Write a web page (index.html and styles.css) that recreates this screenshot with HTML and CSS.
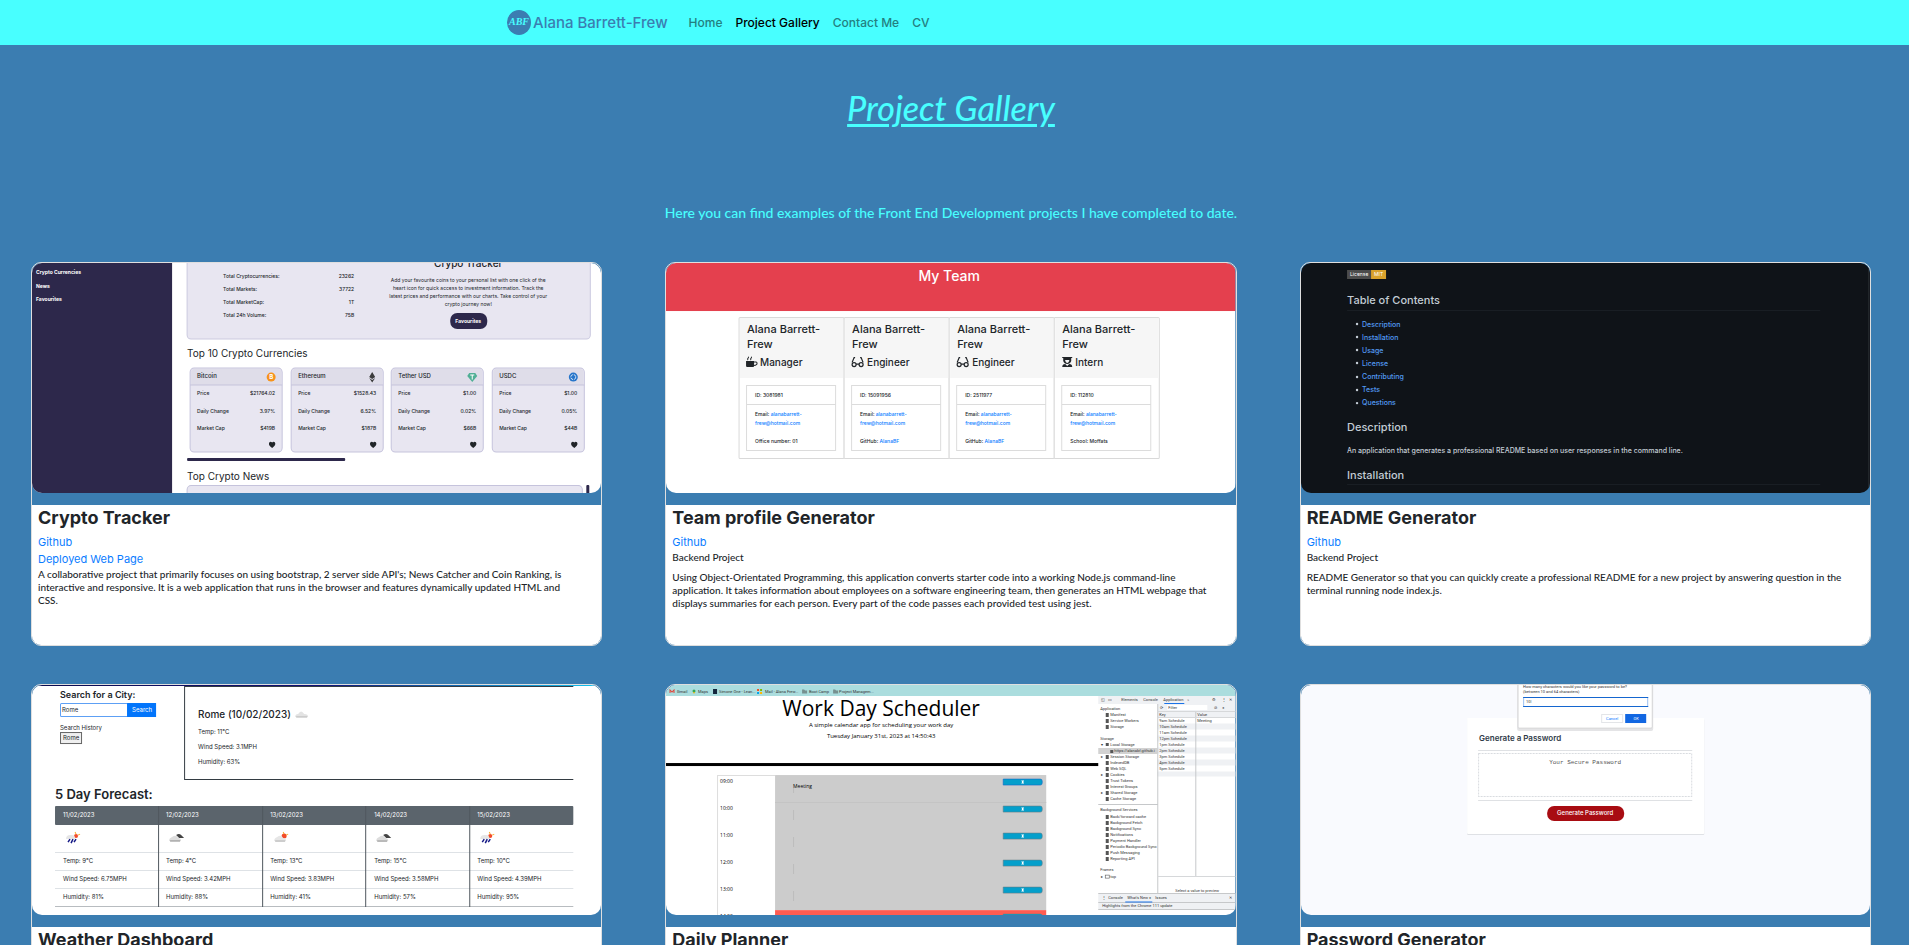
FILE: index.html
```html
<!DOCTYPE html>
<html lang="en">
<head>
<meta charset="utf-8">
<title>Project Gallery</title>
<link rel="stylesheet" href="styles.css">
</head>
<body>
<header class="navbar">
  <a class="brand" href="#">
    <svg class="logo" viewBox="0 0 24 25" aria-hidden="true"><ellipse cx="12" cy="12.5" rx="12" ry="12.5" fill="#3b7db1"/><text x="12" y="15" text-anchor="middle" class="logo-text">ABF</text></svg>
    <span>Alana Barrett-Frew</span>
  </a>
  <nav class="links">
    <a href="#">Home</a>
    <a href="#" class="active" aria-current="page">Project Gallery</a>
    <a href="#">Contact Me</a>
    <a href="#">CV</a>
  </nav>
</header>
<main class="page">
  <h1 class="heading">Project Gallery</h1>
  <p class="intro">Here you can find examples of the Front End Development projects I have completed to date.</p>
  <div class="gallery">

    <article class="card">
      <svg class="shot" viewBox="0 0 569 230" role="img" aria-label="Crypto Tracker">
        <rect width="569" height="230" fill="#fff"/>
        <rect width="140" height="230" fill="#2d284b"/>
        <g class="t5 bold" fill="#fff"><text x="4" y="11">Crypto Currencies</text><text x="4" y="25">News</text><text x="4" y="38">Favourites</text></g>
        <rect x="155" y="-8" width="403" height="84" rx="4" fill="#e8e6f1" stroke="#cbc9df"/>
        <g class="t5 ink medium"><text x="191" y="15">Total Cryptocurrencies:</text><text x="191" y="28">Total Markets:</text><text x="191" y="41">Total MarketCap:</text><text x="191" y="54">Total 24h Volume:</text></g>
        <g class="t5 ink end medium"><text x="322" y="15">23262</text><text x="322" y="28">37722</text><text x="322" y="41">1T</text><text x="322" y="54">75B</text></g>
        <text x="436" y="4" class="t10 ink mid medium">Crypo Tracker</text>
        <g class="t5 ink mid"><text x="436" y="19">Add your favourite coins to your personal list with one click of the</text><text x="436" y="27">heart icon for quick access to investment information. Track the</text><text x="436" y="35">latest prices and performance with our charts. Take control of your</text><text x="436" y="43">crypto journey now!</text></g>
        <rect x="418" y="50" width="37" height="16" rx="7" fill="#2d284b"/>
        <text x="436" y="60" class="t5 mid bold" fill="#fff">Favourites</text>
        <text x="155" y="94" class="t10 ink">Top 10 Crypto Currencies</text>
        <g transform="translate(158 105)"><rect width="92" height="84" rx="4" fill="#e8e6f1" stroke="#c5c3dc"/><path d="M1 17V4a3 3 0 0 1 3-3h84a3 3 0 0 1 3 3v13z" fill="#dfdde9"/><path d="M0 17h92" stroke="#c5c3dc"/><text x="7" y="10" class="t6 ink medium">Bitcoin</text><circle cx="81" cy="9" r="4.5" fill="#f7931a"/><text x="81" y="11" class="t6 mid bold" fill="#fff">B</text><g class="t5 ink medium"><text x="7" y="27">Price</text><text x="7" y="45">Daily Change</text><text x="7" y="62">Market Cap</text></g><g class="t5 ink end medium"><text x="85" y="27">$21764.02</text><text x="85" y="45">3.97%</text><text x="85" y="62">$419B</text></g><path d="M82 80c-6-4-2-8 0-5.500c2-2.500 6 1.500 0 5.500z" fill="#212529"/></g>
        <g transform="translate(259 105)"><rect width="92" height="84" rx="4" fill="#e8e6f1" stroke="#c5c3dc"/><path d="M1 17V4a3 3 0 0 1 3-3h84a3 3 0 0 1 3 3v13z" fill="#dfdde9"/><path d="M0 17h92" stroke="#c5c3dc"/><text x="7" y="10" class="t6 ink medium">Ethereum</text><path d="M81 4l3 5-3 2-3-2zM78 10l3 2 3-2-3 4.500z" fill="#3c3c3d"/><g class="t5 ink medium"><text x="7" y="27">Price</text><text x="7" y="45">Daily Change</text><text x="7" y="62">Market Cap</text></g><g class="t5 ink end medium"><text x="85" y="27">$1528.43</text><text x="85" y="45">6.52%</text><text x="85" y="62">$187B</text></g><path d="M82 80c-6-4-2-8 0-5.500c2-2.500 6 1.500 0 5.500z" fill="#212529"/></g>
        <g transform="translate(359 105)"><rect width="92" height="84" rx="4" fill="#e8e6f1" stroke="#c5c3dc"/><path d="M1 17V4a3 3 0 0 1 3-3h84a3 3 0 0 1 3 3v13z" fill="#dfdde9"/><path d="M0 17h92" stroke="#c5c3dc"/><text x="7" y="10" class="t6 ink medium">Tether USD</text><path d="M78 5h6l2 3-5 6-5-6z" fill="#50af95"/><path d="M79 7h4M81 7v4.500" stroke="#fff"/><g class="t5 ink medium"><text x="7" y="27">Price</text><text x="7" y="45">Daily Change</text><text x="7" y="62">Market Cap</text></g><g class="t5 ink end medium"><text x="85" y="27">$1.00</text><text x="85" y="45">0.02%</text><text x="85" y="62">$66B</text></g><path d="M82 80c-6-4-2-8 0-5.500c2-2.500 6 1.500 0 5.500z" fill="#212529"/></g>
        <g transform="translate(460 105)"><rect width="92" height="84" rx="4" fill="#e8e6f1" stroke="#c5c3dc"/><path d="M1 17V4a3 3 0 0 1 3-3h84a3 3 0 0 1 3 3v13z" fill="#dfdde9"/><path d="M0 17h92" stroke="#c5c3dc"/><text x="7" y="10" class="t6 ink medium">USDC</text><circle cx="81" cy="9" r="4.500" fill="#2775ca"/><circle cx="81" cy="9" r="2.500" fill="none" stroke="#fff" stroke-width=".8" stroke-dasharray="3 1"/><g class="t5 ink medium"><text x="7" y="27">Price</text><text x="7" y="45">Daily Change</text><text x="7" y="62">Market Cap</text></g><g class="t5 ink end medium"><text x="85" y="27">$1.00</text><text x="85" y="45">0.05%</text><text x="85" y="62">$44B</text></g><path d="M82 80c-6-4-2-8 0-5.500c2-2.500 6 1.500 0 5.500z" fill="#212529"/></g>
        <rect x="155" y="195" width="158" height="3" rx="1" fill="#2d284b"/>
        <text x="155" y="217" class="t10 ink">Top Crypto News</text>
        <rect x="155" y="222.500" width="395" height="20" rx="4" fill="#e8e6f1" stroke="#c5c3dc"/>
        <rect x="554" y="222" width="3" height="20" rx="1" fill="#2d284b"/>
      </svg>
      <div class="body">
        <h2>Crypto Tracker</h2>
        <a href="#">Github</a>
        <a href="#">Deployed Web Page</a>
        <p>A collaborative project that primarily focuses on using bootstrap, 2 server side API's; News Catcher and Coin Ranking, is interactive and responsive. It is a web application that runs in the browser and features dynamically updated HTML and CSS.</p>
      </div>
    </article>

    <article class="card">
      <svg class="shot" viewBox="0 0 569 230" role="img" aria-label="Team profile Generator">
        <rect width="569" height="230" fill="#fff"/>
        <rect width="569" height="48" fill="#e4404e"/>
        <text x="283" y="18" class="t14 mid medium" fill="#fff">My Team</text>
        <g fill="#fff" stroke="#d9d9d9"><rect x="73" y="54.500" width="105" height="141" rx="1"/><rect x="178" y="54.500" width="105" height="141" rx="1"/><rect x="283" y="54.500" width="105" height="141" rx="1"/><rect x="388" y="54.500" width="105" height="141" rx="1"/></g>
        <path d="M74 55h103v60H74zM179 55h103v60H179zM284 55h103v60H284zM389 55h103v60H389z" fill="#f6f6f6"/>
        <g fill="none" stroke="#dcdcdc"><path d="M80.500 122.500h89v65h-89zM80.500 141.500h89M185.500 122.500h89v65h-89zM185.500 141.500h89M290.500 122.500h89v65h-89zM290.500 141.500h89M395.500 122.500h89v65h-89zM395.500 141.500h89"/></g>
        <g class="t11 ink medium"><text x="81" y="70">Alana Barrett-</text><text x="81" y="85">Frew</text><text x="186" y="70">Alana Barrett-</text><text x="186" y="85">Frew</text><text x="291" y="70">Alana Barrett-</text><text x="291" y="85">Frew</text><text x="396" y="70">Alana Barrett-</text><text x="396" y="85">Frew</text></g>
        <g class="t10 ink medium"><text x="94" y="103">Manager</text><text x="201" y="103">Engineer</text><text x="306" y="103">Engineer</text><text x="409" y="103">Intern</text></g>
        <path d="M80 98h8v5q0 1-1 1h-6q-1 0-1-1z" fill="#212529"/><path d="M88 99h2q1 0 1 1.500t-3 2M82 97q-1-1 0-2t0-1M85 97q-1-1 0-2t0-1" fill="none" stroke="#212529"/>
        <g fill="none" stroke="#212529" stroke-width="1.200"><path d="M189 94.500h-1l-2 5M194 94.500h1l2 5M190 101h3"/><circle cx="188" cy="101.500" r="2"/><circle cx="195" cy="101.500" r="2"/><path d="M294 94.500h-1l-2 5M299 94.500h1l2 5M295 101h3"/><circle cx="293" cy="101.500" r="2"/><circle cx="300" cy="101.500" r="2"/></g>
        <path d="M396 94h10v1h-1v3q-1 3-4 3t-4-3v-3h-1zM396 104q0-3 3-3l2 2 2-2q3 0 3 3z" fill="#212529"/><path d="M399 97h4v1q-1 2-2 2t-2-2z" fill="#f6f6f6"/>
        <g class="t5 ink medium"><text x="89" y="134">ID: 3081981</text><text x="194" y="134">ID: 15091956</text><text x="299" y="134">ID: 2511977</text><text x="404" y="134">ID: 112810</text>
        <text x="89" y="153">Email: <tspan class="blue">alanabarrett-</tspan></text><text x="194" y="153">Email: <tspan class="blue">alanabarrett-</tspan></text><text x="299" y="153">Email: <tspan class="blue">alanabarrett-</tspan></text><text x="404" y="153">Email: <tspan class="blue">alanabarrett-</tspan></text>
        <text x="89" y="162" class="blue">frew@hotmail.com</text><text x="194" y="162" class="blue">frew@hotmail.com</text><text x="299" y="162" class="blue">frew@hotmail.com</text><text x="404" y="162" class="blue">frew@hotmail.com</text>
        <text x="89" y="180">Office number: 01</text><text x="194" y="180">GitHub: <tspan class="blue">AlanaBF</tspan></text><text x="299" y="180">GitHub: <tspan class="blue">AlanaBF</tspan></text><text x="404" y="180">School: Moffats</text></g>
      </svg>
      <div class="body">
        <h2>Team profile Generator</h2>
        <a href="#">Github</a>
        <p class="kind">Backend Project</p>
        <p>Using Object-Orientated Programming, this application converts starter code into a working Node.js command-line application. It takes information about employees on a software engineering team, then generates an HTML webpage that displays summaries for each person. Every part of the code passes each provided test using jest.</p>
      </div>
    </article>

    <article class="card">
      <svg class="shot" viewBox="0 0 569 230" role="img" aria-label="README Generator">
        <rect width="569" height="230" fill="#0f1318"/>
        <rect x="46" y="7" width="24" height="9" fill="#4c4c4c"/><rect x="70" y="7" width="15" height="9" fill="#d9a22c"/>
        <g class="t5" fill="#fff"><text x="49" y="13">License</text><text x="73" y="13">MIT</text></g>
        <g class="t11 medium" fill="#c3ccd5"><text x="46" y="41">Table of Contents</text><text x="46" y="168">Description</text><text x="46" y="216">Installation</text></g>
        <path d="M46 47.500h473M46 221.500h473" stroke="#191e24"/><path d="M567.500 0v230" stroke="#2a2e33"/>
        <g fill="#c3ccd5"><circle cx="56" cy="61" r="1.200"/><circle cx="56" cy="74" r="1.200"/><circle cx="56" cy="87" r="1.200"/><circle cx="56" cy="100" r="1.200"/><circle cx="56" cy="114" r="1.200"/><circle cx="56" cy="127" r="1.200"/><circle cx="56" cy="140" r="1.200"/></g>
        <g class="t7 medium" fill="#539bf5"><text x="61" y="64">Description</text><text x="61" y="77">Installation</text><text x="61" y="90">Usage</text><text x="61" y="103">License</text><text x="61" y="116">Contributing</text><text x="61" y="129">Tests</text><text x="61" y="142">Questions</text></g>
        <text x="46" y="190" class="t7 medium" fill="#c3ccd5">An application that generates a professional README based on user responses in the command line.</text>
      </svg>
      <div class="body">
        <h2>README Generator</h2>
        <a href="#">Github</a>
        <p class="kind">Backend Project</p>
        <p>README Generator so that you can quickly create a professional README for a new project by answering question in the terminal running node index.js.</p>
      </div>
    </article>

    <article class="card">
      <svg class="shot" viewBox="0 0 569 230" role="img" aria-label="Weather Dashboard">
        <defs><linearGradient id="sky"><stop offset="0" stop-color="#0b0b4d"/><stop offset=".5" stop-color="#10107a"/><stop offset="1" stop-color="#12c4f0"/></linearGradient></defs>
        <rect width="569" height="230" fill="#fff"/><rect width="569" height="1" fill="url(#sky)"/>
        <text x="28" y="13" class="t9 ink semi">Search for a City:</text>
        <rect x="28.500" y="18.500" width="67" height="13" rx="1" fill="#fff" stroke="#5da0f5"/><rect x="95" y="18" width="29" height="14" fill="#0275fb"/>
        <text x="30" y="27" class="t6 ink">Rome</text><text x="110" y="27" class="t6 mid" fill="#fff">Search</text>
        <text x="28" y="45" class="t6 ink">Search History</text><rect x="28.500" y="47.500" width="21" height="11" fill="#efefef" stroke="#666"/><text x="31" y="55" class="t6 ink">Rome</text>
        <path d="M541 1.500H152.500v93H541" fill="none" stroke="#333b42"/>
        <text x="166" y="33" class="t10 ink medium">Rome (10/02/2023)</text>
        <path d="M263 32q0-3 3-3 3-5 6 0 4 0 4 3z" fill="#e3e3e3"/><path d="M264 32h11" stroke="#b5b5b5"/>
        <g class="t6 ink"><text x="166" y="49">Temp: 11°C</text><text x="166" y="64">Wind Speed: 3.1MPH</text><text x="166" y="79">Humidity: 63%</text></g>
        <text x="23" y="114" class="t13 ink semi">5 Day Forecast:</text>
        <rect x="23" y="121" width="518" height="19" rx="1" fill="#5b646c"/>
        <path d="M23 167.500h518M23 185.500h518M23 203.500h518" stroke="#dee2e6"/><path d="M23 221.500h518" stroke="#b8bcc0"/>
        <path d="M126.500 121v101M230.500 121v101M333.500 121v101M437.500 121v101" stroke="#50585f"/>
        <g class="t6" fill="#fff"><text x="31" y="132">11/02/2023</text><text x="134" y="132">12/02/2023</text><text x="238" y="132">13/02/2023</text><text x="342" y="132">14/02/2023</text><text x="445" y="132">15/02/2023</text></g>
        <circle cx="44" cy="151" r="2" fill="#f24b2a"/><path d="M43 147l1 2M48 149l-2 1" stroke="#f7b230"/><path d="M34 154q0-5 6-4 3 0 3 4z" fill="#e6e6e6"/><path d="M36 157l2-3M39 158l2-4M42 157l2-3" stroke="#161a86" stroke-width="1.500"/>
        <circle cx="458" cy="151" r="2" fill="#f24b2a"/><path d="M457 147l1 2M462 149l-2 1" stroke="#f7b230"/><path d="M448 154q0-5 6-4 3 0 3 4z" fill="#e6e6e6"/><path d="M450 157l2-3M453 158l2-4M456 157l2-3" stroke="#161a86" stroke-width="1.500"/>
        <path d="M144 150q3-2 5 0l3 3h-5z" fill="#444"/><path d="M137 156q0-3 3-4 4-3 6 1 3 0 3 3z" fill="#ddd"/><path d="M138 156h10" stroke="#888"/>
        <path d="M351 150q3-2 5 0l3 3h-5z" fill="#444"/><path d="M344 156q0-3 3-4 4-3 6 1 3 0 3 3z" fill="#ddd"/><path d="M345 156h10" stroke="#888"/>
        <circle cx="252" cy="151" r="2.500" fill="#f24b2a"/><path d="M251 147l1 2M256 149l-2 1" stroke="#f7b230"/><path d="M242 156q0-3 3-4 4-3 6 1 3 0 3 3z" fill="#e6e6e6"/><path d="M243 156h10" stroke="#aaa"/>
        <g class="t6 ink"><text x="31" y="178">Temp: 9°C</text><text x="134" y="178">Temp: 4°C</text><text x="238" y="178">Temp: 13°C</text><text x="342" y="178">Temp: 15°C</text><text x="445" y="178">Temp: 10°C</text>
        <text x="31" y="196">Wind Speed: 6.75MPH</text><text x="134" y="196">Wind Speed: 3.42MPH</text><text x="238" y="196">Wind Speed: 3.83MPH</text><text x="342" y="196">Wind Speed: 3.58MPH</text><text x="445" y="196">Wind Speed: 4.39MPH</text>
        <text x="31" y="214">Humidity: 81%</text><text x="134" y="214">Humidity: 88%</text><text x="238" y="214">Humidity: 41%</text><text x="342" y="214">Humidity: 57%</text><text x="445" y="214">Humidity: 95%</text></g>
      </svg>
      <div class="body"><h2>Weather Dashboard</h2></div>
    </article>

    <article class="card">
      <svg class="shot" viewBox="0 0 569 230" role="img" aria-label="Daily Planner">
        <rect width="569" height="230" fill="#fff"/><rect width="569" height="11" fill="#abddde"/>
        <g class="r4" fill="#333"><text x="11" y="8">Gmail</text><text x="32" y="8">Maps</text><text x="53" y="8">Simone One - Lean...</text><text x="99" y="8">Mail - Alana Frew...</text><text x="143" y="8">Boot Camp</text><text x="173" y="8">Project Managem...</text></g>
        <path d="M4 8V5l2 2 2-2v3" fill="none" stroke="#e0453b"/><circle cx="28" cy="6" r="1.500" fill="#34a853"/><path d="M27 7l1 2 1-2z" fill="#f4b400"/><rect x="47" y="4" width="4" height="5" fill="#14263c"/><path d="M91 4h2v2h-2z" fill="#f25022"/><path d="M94 4h2v2h-2z" fill="#7fba00"/><path d="M91 7h2v2h-2z" fill="#00a4ef"/><path d="M94 7h2v2h-2z" fill="#ffb900"/><path d="M136 4.500h2l1 1h2v3h-5zM167 4.500h2l1 1h2v3h-5z" fill="#77908f"/>
        <text x="215" y="31" class="open title mid">Work Day Scheduler</text>
        <g class="open small mid"><text x="215" y="42">A simple calendar app for scheduling your work day</text><text x="215" y="53">Tuesday January 31st, 2023 at 14:50:43</text></g>
        <rect y="78" width="432" height="3" fill="#000"/>
        <path d="M51.500 230V90.500H109" fill="none" stroke="#ddd"/><rect x="109" y="90" width="271" height="135" fill="#ccc"/><rect x="109" y="225" width="271" height="5" fill="#ff5c52"/>
        <path d="M127.500 103v5M127.500 125v10M127.500 152v10M127.500 179v10M127.500 206v10" stroke="#bdbdbd"/><path d="M109 117.500h271" stroke="#c4c4c4"/>
        <g class="open t5"><text x="54" y="98">09:00</text><text x="54" y="125">10:00</text><text x="54" y="152">11:00</text><text x="54" y="179">12:00</text><text x="54" y="206">13:00</text><text x="54" y="233">14:00</text><text x="127" y="103">Meeting</text></g>
        <g fill="#049fcb" stroke="#607d88" stroke-width=".6"><path d="M337 94h37q2 0 2 2v2q0 2-2 2h-37z" stroke="#1266c8"/><path d="M337 121h37q2 0 2 2v2q0 2-2 2h-37zM337 148h37q2 0 2 2v2q0 2-2 2h-37zM337 175h37q2 0 2 2v2q0 2-2 2h-37zM337 202h37q2 0 2 2v2q0 2-2 2h-37zM337 229h37q2 0 2 2h-39z"/></g>
        <path d="M355 95.500h3l-1 1.500 1 1.500h-3l1-1.500zM355 122.500h3l-1 1.500 1 1.500h-3l1-1.500zM355 149.500h3l-1 1.500 1 1.500h-3l1-1.500zM355 176.500h3l-1 1.500 1 1.500h-3l1-1.500zM355 203.500h3l-1 1.500 1 1.500h-3l1-1.500z" fill="#fff"/>
        <path d="M432 11h137v8H432z" fill="#eff1f4"/><path d="M491 19h78v14h-78z" fill="#eff1f4"/><path d="M501 20h40v5h-40z" fill="#fff"/>
        <path d="M491 38.500h78v6h-78zM491 50.500h78v6h-78zM491 62.500h78v6h-78zM491 74.500h78v6h-78zM491 86.500h78v5h-78z" fill="#eff1f4"/>
        <path d="M432 63h59v6h-59z" fill="#d2d2d2"/>
        <path d="M491.500 19v190M529.500 26v166M432 119.500h59" fill="none" stroke="#c6c8ca"/><path d="M491 26.500h78M491 32.500h78M491 191.500h78" stroke="#d6d8da"/>
        <path d="M432 208.500h137v16H432z" fill="#eff1f4"/><path d="M432 208.500h137M432 217.500h137M432 224.500h137" stroke="#c6c8ca"/><path d="M498 18.500h20M459 217h27" stroke="#1a73e8"/>
        <g class="r4" fill="#333"><text x="455" y="16">Elements</text><text x="477" y="16">Console</text><text x="497" y="16">Application</text><text x="521" y="16">»</text><text x="556" y="16">⋮</text><text x="563" y="16">✕</text><text x="546" y="16">⚙</text><text x="435" y="16">◱</text><text x="442" y="16">▭</text>
        <text x="494" y="24">⟳</text><text x="502" y="24">Filter</text><text x="548" y="24">⊘</text><text x="556" y="24">×</text>
        <text x="434" y="25">Application</text><text x="434" y="55">Storage</text><text x="434" y="126">Background Services</text><text x="434" y="186">Frames</text>
        <text x="444" y="31">Manifest</text><text x="444" y="37">Service Workers</text><text x="444" y="43">Storage</text><text x="444" y="61">Local Storage</text><text x="448" y="67">https://alanabf.github.i</text><text x="444" y="73">Session Storage</text><text x="444" y="79">IndexedDB</text><text x="444" y="85">Web SQL</text><text x="444" y="91">Cookies</text><text x="444" y="97">Trust Tokens</text><text x="444" y="103">Interest Groups</text><text x="444" y="109">Shared Storage</text><text x="444" y="115">Cache Storage</text>
        <text x="444" y="133">Back/forward cache</text><text x="444" y="139">Background Fetch</text><text x="444" y="145">Background Sync</text><text x="444" y="151">Notifications</text><text x="444" y="157">Payment Handler</text><text x="444" y="163">Periodic Background Sync</text><text x="444" y="169">Push Messaging</text><text x="444" y="175">Reporting API</text><text x="444" y="193">top</text>
        <text x="493" y="31">Key</text><text x="531" y="31">Value</text><text x="493" y="37">9am Schedule</text><text x="531" y="37">Meeting</text><text x="493" y="43">10am Schedule</text><text x="493" y="49">11am Schedule</text><text x="493" y="55">12pm Schedule</text><text x="493" y="61">1pm Schedule</text><text x="493" y="67">2pm Schedule</text><text x="493" y="73">3pm Schedule</text><text x="493" y="79">4pm Schedule</text><text x="493" y="85">5pm Schedule</text>
        <text x="509" y="207">Select a value to preview</text><text x="436" y="214">⋮</text><text x="442" y="214">Console</text><text x="461" y="214">What's New ×</text><text x="489" y="214">Issues</text><text x="563" y="214">✕</text><text x="436" y="222">Highlights from the Chrome 111 update</text>
        <text x="435" y="61">▾</text><text x="435" y="73">▸</text><text x="435" y="91">▸</text><text x="435" y="109">▸</text><text x="435" y="193">▸</text></g>
        <g fill="none" stroke="#555" stroke-width="3" stroke-dasharray="4 2"><path d="M441 28v16"/><path d="M441 58v3M441 70v46M441 130v46"/></g><rect x="439" y="190" width="4" height="3" fill="none" stroke="#555" stroke-width=".6"/><rect x="444" y="65" width="3" height="3" fill="#555"/>
      </svg>
      <div class="body"><h2>Daily Planner</h2></div>
    </article>

    <article class="card">
      <svg class="shot" viewBox="0 0 569 230" role="img" aria-label="Password Generator">
        <rect width="569" height="230" fill="#f9fafe"/>
        <rect x="166" y="34" width="237" height="116" rx="1" fill="#dfe1e5"/><rect x="166" y="33" width="237" height="116" rx="1" fill="#fff"/>
        <rect x="216" y="-5" width="136" height="51" rx="2" fill="#e4e4e6"/><rect x="217" y="-6" width="134" height="49" rx="1" fill="#fff" stroke="#c9c9cb" stroke-width=".6"/>
        <g class="r4" fill="#333"><text x="222" y="3">How many characters would you like your password to be?</text><text x="222" y="8">(between 10 and 64 characters)</text><text x="225" y="18">10|</text></g>
        <rect x="222.500" y="12.500" width="124" height="9" fill="none" stroke="#9cc0f0"/><path d="M222 21.500h125M222 12.500h125" stroke="#1566cf"/>
        <rect x="300.500" y="29.500" width="21" height="8" fill="#fff" stroke="#e3e5e8"/><rect x="324" y="29" width="21" height="9" fill="#1267e2"/>
        <text x="311" y="35" class="r4 mid blue">Cancel</text><text x="335" y="35" class="r4 mid" fill="#fff">OK</text>
        <text x="178" y="56" class="t8 semi" fill="#2f3b48">Generate a Password</text>
        <path d="M177 65.500h214M177 115.500h214" stroke="#dfe1e4"/><rect x="177.500" y="68.500" width="213" height="43" fill="none" stroke="#d9dce0" stroke-dasharray="2 1"/>
        <text x="284" y="79" class="mono mid">Your Secure Password</text>
        <rect x="246" y="121" width="77" height="15" rx="7" fill="#a80c12"/><text x="284" y="130" class="t6 mid medium" fill="#fff">Generate Password</text>
      </svg>
      <div class="body"><h2>Password Generator</h2></div>
    </article>
  </div>
</main>
</body>
</html>
```

FILE: styles.css
```css
* { box-sizing: border-box; }
body { margin: 0; height: 100vh; overflow: hidden; background: #3b7db1; color: #212529; font-family: Inter, "Liberation Sans", sans-serif; }
a { text-decoration: none; color: #0a7cff; }

.navbar { display: flex; align-items: center; gap: 21px; height: 45px; padding-left: 507px; background: #48ffff; }
.brand { display: flex; align-items: center; gap: 2px; font-size: 15px; font-weight: 500; color: #3b7db1; }
.logo { width: 24px; height: 25px; }
.logo-text { font: italic bold 10px "Liberation Serif", serif; fill: #48ffff; }
.links { display: flex; gap: 13px; font-size: 12px; font-weight: 500; }
.links a { color: #24807f; }
.links .active { color: #000; }

.page { padding: 39px 38px 0 31px; }
.heading { margin: 0; text-align: center; font: italic 500 34px/48px "Gill Sans", Lato, sans-serif; color: #48ffff; text-decoration: underline; text-decoration-thickness: 3px; text-underline-offset: 3px; }
.intro { margin: 71px 0 39px; text-align: center; font: 500 14px/20px "Gill Sans", Lato, sans-serif; color: #48ffff; }

.gallery { display: grid; grid-template-columns: repeat(3, 1fr); gap: 38px 63px; }
.card { display: flex; flex-direction: column; gap: 12px; border: 1px solid #dfdfdf; border-radius: 10px; overflow: hidden; }
.shot { display: block; width: 100%; aspect-ratio: 569 / 230; border-radius: 10px; }
.body { display: flex; flex-direction: column; align-items: flex-start; flex: 1; min-height: 140px; padding: 0 20px 0 6px; background: #fff; }
.body h2 { margin: 0 0 3px; font-size: 18px; line-height: 26px; font-weight: 700; }
.body a { font-size: 11px; line-height: 17px; }
.body p { margin: 0; font: 500 10px/13px "Gill Sans", Lato, sans-serif; }
.body .kind { margin-bottom: 7px; }

.shot text { font-family: Inter, sans-serif; }
.t5 { font-size: 5px; }
.t6 { font-size: 6px; }
.t7 { font-size: 7px; }
.t8 { font-size: 8px; }
.t9 { font-size: 9px; }
.t10 { font-size: 10px; }
.t11 { font-size: 11px; }
.t13 { font-size: 13px; }
.t14 { font-size: 14px; }
.ink { fill: #212529; }
.blue { fill: #0a7cff; }
.medium { font-weight: 500; }
.semi { font-weight: 600; }
.bold { font-weight: 700; }
.mid { text-anchor: middle; }
.end { text-anchor: end; }
.shot .open, .shot .open text { font-family: "Open Sans", sans-serif; }
.title { font-size: 21px; }
.small { font-size: 6px; }
.shot .r4, .shot .r4 text { font-family: Roboto, sans-serif; font-size: 4px; }
.shot .mono { font-family: "Liberation Mono", monospace; font-size: 6px; fill: #555; }
```
